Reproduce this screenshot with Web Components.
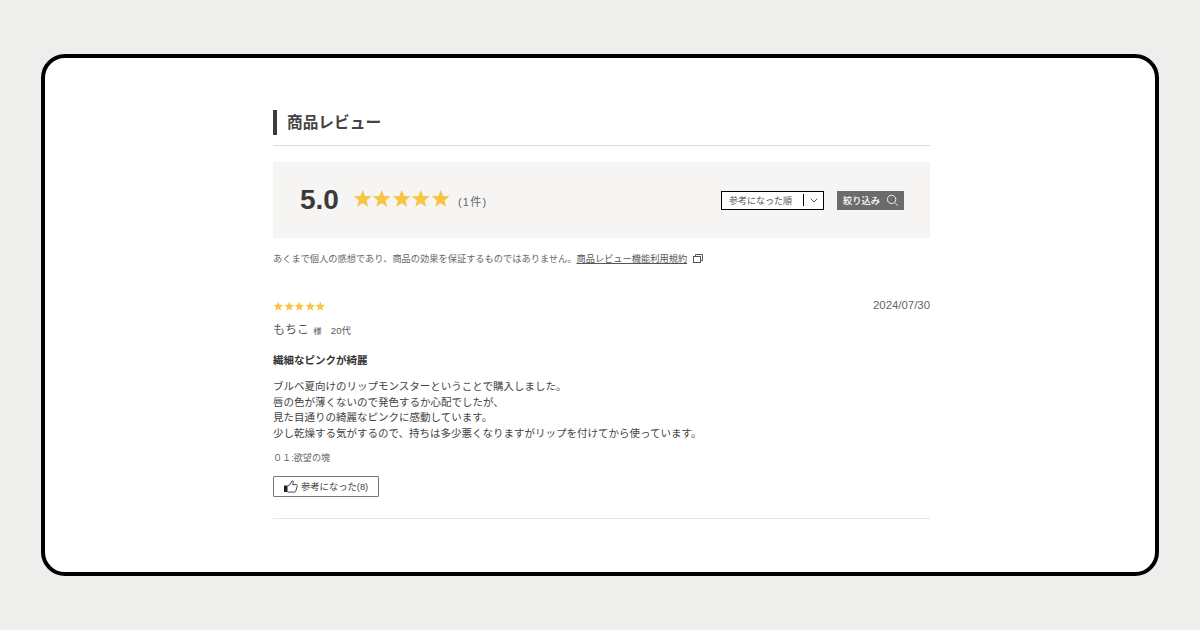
<!doctype html>
<html lang="ja">
<head>
<meta charset="utf-8">
<title>商品レビュー</title>
<style>
  html, body { margin: 0; height: 100%; }
  body {
    background: #eeeeec;
    color: #333;
    font-family: "Liberation Sans", "Noto Sans CJK JP", sans-serif;
  }
</style>
</head>
<body>
<review-frame>
  <review-heading>商品レビュー</review-heading>
  <review-summary score="5.0" count="(1件)"></review-summary>
  <review-notice></review-notice>
  <review-item date="2024/07/30" name="もちこ" age="20代" title="繊細なピンクが綺麗" variant="０１:欲望の塊" helpful="参考になった(8)">
    ブルベ夏向けのリップモンスターということで購入しました。<br>
    唇の色が薄くないので発色するか心配でしたが、<br>
    見た目通りの綺麗なピンクに感動しています。<br>
    少し乾燥する気がするので、持ちは多少悪くなりますがリップを付けてから使っています。
  </review-item>
</review-frame>

<script>
const STAR = 'M12 1l2.9 7.6 8.1.4-6.3 5.1 2.1 7.9L12 17.6 5.2 22l2.1-7.9L1 9l8.1-.4z';

class ReviewFrame extends HTMLElement {
  constructor() {
    super();
    this.attachShadow({mode: 'open'}).innerHTML = `
      <style>
        :host { display: block; padding: 54px 41px; box-sizing: border-box; height: 630px; }
        .card {
          box-sizing: border-box;
          height: 522px;
          background: #fff;
          border: 4px solid #000;
          border-radius: 24px;
          padding: 52px 225px 0 228px;
        }
      </style>
      <div class="card"><slot></slot></div>
    `;
  }
}

class ReviewHeading extends HTMLElement {
  constructor() {
    super();
    this.attachShadow({mode: 'open'}).innerHTML = `
      <style>
        :host {
          display: block;
          height: 35px;
          border-bottom: 1px solid #dcdcdc;
        }
        h2 {
          margin: 0;
          height: 25px;
          border-left: 4px solid #3c3c3c;
          padding-left: 10px;
          font-size: 15.7px;
          line-height: 25px;
          font-weight: 700;
          color: #444;
        }
      </style>
      <h2><slot></slot></h2>
    `;
  }
}

class StarRow extends HTMLElement {
  constructor() {
    super();
    const size = this.getAttribute('size') || 20;
    const star = `<svg width="${size}" height="${size}" viewBox="0 0 24 24"><path fill="#f7c544" d="${STAR}"/></svg>`;
    this.attachShadow({mode: 'open'}).innerHTML = `
      <style>
        :host { display: inline-flex; }
        svg { display: block; }
      </style>
      ${star.repeat(5)}
    `;
  }
}

class ReviewSummary extends HTMLElement {
  constructor() {
    super();
    this.attachShadow({mode: 'open'}).innerHTML = `
      <style>
        :host {
          display: flex;
          align-items: center;
          height: 76px;
          margin-top: 16px;
          padding: 0 26px 0 27px;
          background: #f6f5f3;
        }
        .score { font-size: 28px; font-weight: 700; color: #3a3a3a; margin-right: 14px; line-height: 76px; }
        .stars { margin-top: -2px; }
        .count { font-size: 11px; letter-spacing: 1.3px; color: #666; margin-left: 8px; margin-top: 2px; }
        .sort {
          margin-left: auto;
          box-sizing: border-box;
          width: 103px;
          height: 19px;
          display: flex;
          align-items: center;
          background: #fff;
          border: 1px solid #000;
          font-size: 9px;
          color: #555;
          padding-left: 7px;
        }
        .sort span { flex: 1; }
        .sort i { width: 1px; height: 12px; background: #000; }
        .sort svg { margin: 0 5px 0 6px; display: block; }
        .filter {
          margin-left: 13px;
          box-sizing: border-box;
          width: 67px;
          height: 19px;
          display: flex;
          align-items: center;
          justify-content: space-between;
          padding: 0 5px 0 6px;
          background: #6b6b6b;
          color: #fff;
          font-size: 9.25px;
          font-weight: 500;
        }
        .filter svg { display: block; }
      </style>
      <span class="score">${this.getAttribute('score')}</span>
      <star-row class="stars" size="19.4"></star-row>
      <span class="count">${this.getAttribute('count')}</span>
      <div class="sort">
        <span>参考になった順</span><i></i>
        <svg width="8" height="5" viewBox="0 0 8 5"><path fill="none" stroke="#555" d="M.7.7L4 4l3.3-3.3"/></svg>
      </div>
      <div class="filter">
        <span>絞り込み</span>
        <svg width="13" height="13" viewBox="0 0 13 13" fill="none" stroke="#eee"><circle cx="5.6" cy="5.4" r="4.2"/><path d="M8.7 8.5l3.3 3.4"/></svg>
      </div>
    `;
  }
}

class ReviewNotice extends HTMLElement {
  constructor() {
    super();
    this.attachShadow({mode: 'open'}).innerHTML = `
      <style>
        :host {
          display: flex;
          align-items: center;
          margin-top: 14px;
          font-size: 9.22px;
          line-height: 14px;
          color: #666;
        }
        a { color: #555; text-decoration: underline; }
        svg { margin-left: 6px; margin-top: -2px; display: block; }
      </style>
      <span>あくまで個人の感想であり、商品の効果を保証するものではありません。<a href="#">商品レビュー機能利用規約</a></span>
      <svg width="10" height="9" viewBox="0 0 10 9" fill="none" stroke="#555"><rect x=".5" y="2.5" width="7" height="6" fill="#fff"/><path d="M2.5 2.5v-2h7v6h-2"/></svg>
    `;
  }
}

class ReviewItem extends HTMLElement {
  constructor() {
    super();
    const a = n => this.getAttribute(n);
    this.attachShadow({mode: 'open'}).innerHTML = `
      <style>
        :host { display: block; margin-top: 32px; height: 220px; border-bottom: 1px solid #e6e6e6; color: #333; }
        .top { display: flex; justify-content: space-between; align-items: center; height: 16px; }
        .date { font-size: 11.4px; color: #666; margin-top: -2px; }
        .who { margin-top: 8px; height: 16px; line-height: 16px; font-size: 12px; color: #555; }
        .who small { font-size: 8.5px; margin: 0 9px 0 1px; }
        .who .age { font-size: 9.5px; }
        h3 { margin: 14px 0 0; font-size: 10.5px; line-height: 16px; font-weight: 700; color: #333; }
        .body { margin-top: 11px; font-size: 10.5px; line-height: 15.7px; color: #444; }
        .variant { margin-top: 9px; font-size: 9.1px; line-height: 14px; color: #666; }
        button {
          display: flex;
          align-items: center;
          gap: 3px;
          box-sizing: border-box;
          margin-top: 11px;
          width: 106px;
          height: 21px;
          padding: 0 0 0 10px;
          background: #fff;
          border: 1px solid #777;
          border-radius: 1px;
          font: inherit;
          font-size: 9.3px;
          color: #444;
        }
        button svg { display: block; }
      </style>
      <div class="top">
        <star-row size="10.5"></star-row>
        <span class="date">${a('date')}</span>
      </div>
      <div class="who">${a('name')} <small>様</small><span class="age">${a('age')}</span></div>
      <h3>${a('title')}</h3>
      <div class="body"><slot></slot></div>
      <div class="variant">${a('variant')}</div>
      <button type="button">
        <svg width="14" height="13" viewBox="0 0 14 13"><rect x="0" y="5.5" width="3.5" height="6.5" fill="#222"/><path fill="none" stroke="#333" stroke-width=".9" d="M3.5 6l2.6-1.5L8 .8c1 0 1.5 1 1.2 2L8.7 4.6h3.6c1 0 1.3 1 .9 1.7l-1.5 5c-.2.6-.6.8-1.1.8H3.5"/></svg>
        <span>${a('helpful')}</span>
      </button>
    `;
  }
}

customElements.define('star-row', StarRow);
customElements.define('review-frame', ReviewFrame);
customElements.define('review-heading', ReviewHeading);
customElements.define('review-summary', ReviewSummary);
customElements.define('review-notice', ReviewNotice);
customElements.define('review-item', ReviewItem);
</script>
</body>
</html>
